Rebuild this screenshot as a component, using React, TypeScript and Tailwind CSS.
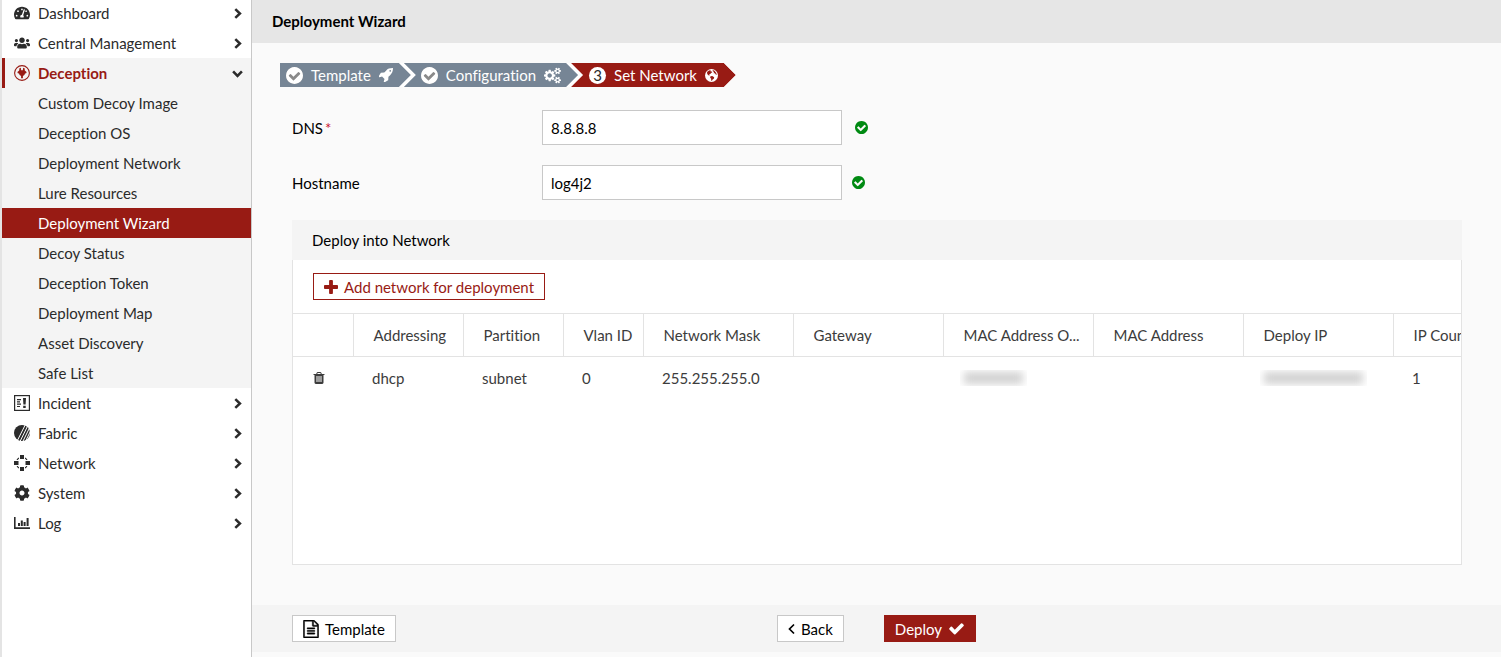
import type { ComponentType, ReactNode } from "react";
import { FaCog, FaTachometerAlt, FaUsers } from "react-icons/fa";

type IconProps = { className?: string };
type Icon = ComponentType<IconProps>;

function Glyph({ d, className, viewBox = "0 0 1792 1792" }: { d: string; className?: string; viewBox?: string }) {
  return (
    <svg viewBox={viewBox} fill="currentColor" className={className} aria-hidden="true">
      <path d={d} />
    </svg>
  );
}

const TrashIcon = (p: IconProps) => (
  <Glyph {...p} d="M704 1376v-704q0-14-9-23t-23-9h-64q-14 0-23 9t-9 23v704q0 14 9 23t23 9h64q14 0 23-9t9-23zm256 0v-704q0-14-9-23t-23-9h-64q-14 0-23 9t-9 23v704q0 14 9 23t23 9h64q14 0 23-9t9-23zm256 0v-704q0-14-9-23t-23-9h-64q-14 0-23 9t-9 23v704q0 14 9 23t23 9h64q14 0 23-9t9-23zm-544-992h448l-48-117q-7-9-17-11h-317q-10 2-17 11zm928 32v64q0 14-9 23t-23 9h-96v948q0 83-47 143.500t-113 60.500h-832q-66 0-113-58.500t-47-141.500v-952h-96q-14 0-23-9t-9-23v-64q0-14 9-23t23-9h309l70-167q15-37 54-63t79-26h320q40 0 79 26t54 63l70 167h309q14 0 23 9t9 23z" />
);
const CheckIcon = (p: IconProps) => (
  <Glyph {...p} d="M1671 566q0 40-28 68l-724 724-136 136q-28 28-68 28t-68-28l-136-136-362-362q-28-28-28-68t28-68l136-136q28-28 68-28t68 28l294 295 656-657q28-28 68-28t68 28l136 136q28 28 28 68z" />
);
const CheckCircleIcon = (p: IconProps) => (
  <Glyph
    {...p}
    viewBox="128 128 1536 1536"
    d="M1412 734q0-28-18-46l-91-90q-19-19-45-19t-45 19l-408 407-226-226q-19-19-45-19t-45 19l-91 90q-18 18-18 46 0 27 18 45l362 362q19 19 45 19 27 0 46-19l543-543q18-18 18-45zm252 162q0 209-103 385.500t-279.500 279.500-385.500 103-385.500-103-279.500-279.500-103-385.500 103-385.500 279.500-279.500 385.500-103 385.500 103 279.500 279.500 103 385.500z"
  />
);
const PlusIcon = (p: IconProps) => (
  <Glyph
    {...p}
    viewBox="192 128 1408 1408"
    d="M1600 736v192q0 40-28 68t-68 28h-416v416q0 40-28 68t-68 28h-192q-40 0-68-28t-28-68v-416h-416q-40 0-68-28t-28-68v-192q0-40 28-68t68-28h416v-416q0-40 28-68t68-28h192q40 0 68 28t28 68v416h416q40 0 68 28t28 68z"
  />
);
const FileTextIcon = (p: IconProps) => (
  <Glyph
    {...p}
    viewBox="128 0 1536 1792"
    d="M1596 380q28 28 48 76t20 88v1152q0 40-28 68t-68 28h-1344q-40 0-68-28t-28-68v-1600q0-40 28-68t68-28h896q40 0 88 20t76 48zm-444-244v376h376q-10-29-22-41l-313-313q-12-12-41-22zm384 1528v-1024h-416q-40 0-68-28t-28-68v-416h-768v1536h1280zm-1024-864q0-14 9-23t23-9h704q14 0 23 9t9 23v64q0 14-9 23t-23 9h-704q-14 0-23-9t-9-23v-64zm736 224q14 0 23 9t9 23v64q0 14-9 23t-23 9h-704q-14 0-23-9t-9-23v-64q0-14 9-23t23-9h704zm0 256q14 0 23 9t9 23v64q0 14-9 23t-23 9h-704q-14 0-23-9t-9-23v-64q0-14 9-23t23-9h704z"
  />
);
const RocketIcon = (p: IconProps) => (
  <Glyph
    {...p}
    viewBox="64 128 1600 1600"
    d="M1440 448q0-40-28-68t-68-28-68 28-28 68 28 68 68 28 68-28 28-68zm224-288q0 249-75.500 430.500t-253.500 360.500q-81 80-195 176l-20 379q-2 16-16 26l-384 224q-7 4-16 4-12 0-23-9l-64-64q-13-14-8-32l85-276-281-281-276 85q-3 1-9 1-14 0-23-9l-64-64q-17-19-5-39l224-384q10-14 26-16l379-20q96-114 176-195 188-187 358-258t431-71q14 0 24 9.500t10 22.500z"
  />
);
const CogsIcon = (p: IconProps) => (
  <Glyph
    {...p}
    viewBox="0 0 1920 1792"
    d="M896 896q0-106-75-181t-181-75-181 75-75 181 75 181 181 75 181-75 75-181zm768 512q0-52-38-90t-90-38-90 38-38 90q0 53 37.500 90.500t90.500 37.500 90.500-37.500 37.500-90.500zm0-1024q0-52-38-90t-90-38-90 38-38 90q0 53 37.500 90.500t90.500 37.500 90.500-37.500 37.500-90.500zm-384 421v185q0 10-7 19.500t-16 10.500l-155 24q-11 35-32 76 34 48 90 115 7 11 7 20 0 12-7 19-23 30-82.500 89.500t-78.500 59.500q-11 0-21-7l-115-90q-37 19-77 31-11 108-23 155-7 24-30 24h-186q-11 0-20-7.500t-10-17.500l-23-153q-34-10-75-31l-118 89q-7 7-20 7-11 0-21-8-144-133-144-160 0-9 7-19 10-14 41-53t47-61q-23-44-35-82l-152-24q-10-1-17-9.500t-7-19.500v-185q0-10 7-19.500t16-10.500l155-24q11-35 32-76-34-48-90-115-7-11-7-20 0-12 7-20 22-30 82-89t79-59q11 0 21 7l115 90q34-18 77-32 11-108 23-154 7-24 30-24h186q11 0 20 7.500t10 17.500l23 153q34 10 75 31l118-89q8-7 20-7 11 0 21 8 144 133 144 160 0 8-7 19-12 16-42 54t-45 60q23 48 34 82l152 23q10 2 17 10.500t7 19.500zm640 533v140q0 16-149 31-12 27-30 52 51 113 51 138 0 4-4 7-122 71-124 71-8 0-46-47t-52-68q-20 2-30 2t-30-2q-14 21-52 68t-46 47q-2 0-124-71-4-3-4-7 0-25 51-138-18-25-30-52-149-15-149-31v-140q0-16 149-31 13-29 30-52-51-113-51-138 0-4 4-7 4-2 35-20t59-34 30-16q8 0 46 46.500t52 67.500q20-2 30-2t30 2q51-71 92-112l6-2q4 0 124 70 4 3 4 7 0 25-51 138 17 23 30 52 149 15 149 31zm0-1024v140q0 16-149 31-12 27-30 52 51 113 51 138 0 4-4 7-122 71-124 71-8 0-46-47t-52-68q-20 2-30 2t-30-2q-14 21-52 68t-46 47q-2 0-124-71-4-3-4-7 0-25 51-138-18-25-30-52-149-15-149-31v-140q0-16 149-31 13-29 30-52-51-113-51-138 0-4 4-7 4-2 35-20t59-34 30-16q8 0 46 46.500t52 67.500q20-2 30-2t30 2q51-71 92-112l6-2q4 0 124 70 4 3 4 7 0 25-51 138 17 23 30 52 149 15 149 31z"
  />
);

function DoneIcon() {
  return (
    <span className="flex rounded-full bg-[#8a8a8a]">
      <CheckCircleIcon className="size-[17px]" />
    </span>
  );
}
function GlobeIcon({ className }: IconProps) {
  return (
    <svg viewBox="0 0 14 14" className={className} aria-hidden="true">
      <circle cx="7" cy="7" r="7" fill="currentColor" />
      <g fill="#981b14">
        <path d="M2.200 3.200L4.300 1.700L6.200 1.300L5.800 2.300L7.200 2.700L7.900 3.600L6.600 4.300L5.700 5.400L4.500 6L4.900 7.200L3.700 6.800L2.400 5.300Z" />
        <path d="M8.200 1.200L10.300 2L12.100 4.200L12.700 6.500L11.600 5.900L10.700 4.500L9.300 4.600L9.700 3.200L8.500 2.400Z" />
        <path d="M5.900 7.700L7.800 7.500L9.900 8.900L9.500 10.500L8.200 11.400L7.500 12.700L6.700 12.600L6.600 10.500L5.500 9.100Z" />
      </g>
    </svg>
  );
}
function ChevronIcon({ className }: IconProps) {
  return (
    <svg viewBox="0 0 10 10" fill="none" stroke="currentColor" strokeWidth="2.300" className={className} aria-hidden="true">
      <path d="M3 1L7.200 5L3 9" />
    </svg>
  );
}
function AngleLeftIcon({ className }: IconProps) {
  return (
    <svg viewBox="0 0 7 12" fill="none" stroke="currentColor" strokeWidth="1.700" className={className} aria-hidden="true">
      <path d="M6 1.500L1.500 6L6 10.500" />
    </svg>
  );
}
function DeceptionIcon({ className }: IconProps) {
  return (
    <svg viewBox="0 0 16 16" fill="currentColor" className={className} aria-hidden="true">
      <circle cx="8" cy="8" r="7.400" fill="none" stroke="currentColor" strokeWidth="1.100" />
      <path d="M5.400 3.200L6.800 2.800L7.200 5.200H8.800L9.200 2.800L10.600 3.200L10.800 5.400L12.600 7L12.200 8.200L11 8.400L10.400 10L8.900 10.900V13.200H7.100V10.900L5.600 10L5 8.400L3.800 8.200L3.400 7L5.200 5.400Z" />
    </svg>
  );
}
function IncidentIcon({ className }: IconProps) {
  return (
    <svg viewBox="0 0 16 16" fill="currentColor" className={className} aria-hidden="true">
      <rect x="0.600" y="0.600" width="14.800" height="14.800" fill="none" stroke="currentColor" strokeWidth="1.200" />
      <path d="M3 4h4v1.200H3zM3 6.300h3v1.200H3zM3 8.600h4v1.200H3zM3 10.900h3v1.200H3zM9 3h3L11.600 9.500H9.400zM9.200 10.800h2.500V13H9.200z" />
    </svg>
  );
}
function FabricIcon({ className }: IconProps) {
  return (
    <svg viewBox="0 0 16 16" className={className} aria-hidden="true">
      <circle cx="8" cy="8" r="8" fill="currentColor" />
      <g stroke="white" strokeWidth="1" fill="none">
        <path d="M3.400 15.500L11.200 0M6 16.500L13.400 1.500M8.600 17L15.200 3.500M11.200 17L16.500 6" />
      </g>
    </svg>
  );
}
function NetworkIcon({ className }: IconProps) {
  return (
    <svg viewBox="0 0 16 16" fill="currentColor" className={className} aria-hidden="true">
      <circle cx="8" cy="8" r="5.800" fill="none" stroke="currentColor" strokeWidth="1.200" />
      <path fill="white" d="M5 0h6v5H5zM5 11h6v5H5zM0 5h5v6H0zM11 5h5v6h-5z" />
      <path d="M6 0h4v4H6zM6 12h4v4H6zM0 6h4.500v4H0zM11.500 6H16v4h-4.500z" />
    </svg>
  );
}
function LogIcon({ className }: IconProps) {
  return (
    <svg viewBox="0 0 16 16" fill="currentColor" className={className} aria-hidden="true">
      <path d="M0 2h1.600v10.200H16V14H0zM4 8h2v3H4zM6.800 5.500h2V11h-2zM9.600 7h2v4h-2zM12.600 3h2v8h-2z" />
    </svg>
  );
}

const deceptionPages = [
  "Custom Decoy Image",
  "Deception OS",
  "Deployment Network",
  "Lure Resources",
  "Deployment Wizard",
  "Decoy Status",
  "Deception Token",
  "Deployment Map",
  "Asset Discovery",
  "Safe List",
];

function MenuItem({ icon: IconCmp, label, open = false }: { icon: Icon; label: string; open?: boolean }) {
  return (
    <button
      type="button"
      aria-expanded={open}
      className={
        open
          ? "flex h-[30px] w-full items-center gap-2 border-l-3 border-[#981b14] pr-2 pl-[9px] text-left font-bold text-[#981b14]"
          : "flex h-[30px] w-full items-center gap-2 pr-2 pl-3 text-left"
      }
    >
      <IconCmp className="size-4 shrink-0" />
      <span className="flex-1">{label}</span>
      <ChevronIcon className={open ? "size-[11px] rotate-90 text-[#2b2b2b]" : "size-[11px] text-[#2b2b2b]"} />
    </button>
  );
}

function Sidebar() {
  return (
    <nav aria-label="Main" className="flex w-[252px] shrink-0 flex-col border-r border-l-2 border-r-[#c8c8c8] border-l-[#e4e4e4] bg-white text-[#2b2b2b]">
      <div className="-mt-0.5">
        <MenuItem icon={FaTachometerAlt} label="Dashboard" />
        <MenuItem icon={FaUsers} label="Central Management" />
      </div>
      <div className="bg-[#f4f4f4]">
        <MenuItem icon={DeceptionIcon} label="Deception" open />
        <ul>
          {deceptionPages.map((page) => (
            <li key={page}>
              <a
                href="#"
                className={
                  page === "Deployment Wizard"
                    ? "flex h-[30px] items-center bg-[#981b14] pl-9 text-white"
                    : "flex h-[30px] items-center pl-9"
                }
              >
                {page}
              </a>
            </li>
          ))}
        </ul>
      </div>
      <MenuItem icon={IncidentIcon} label="Incident" />
      <MenuItem icon={FabricIcon} label="Fabric" />
      <MenuItem icon={NetworkIcon} label="Network" />
      <MenuItem icon={FaCog} label="System" />
      <MenuItem icon={LogIcon} label="Log" />
    </nav>
  );
}

function Steps() {
  return (
    <ol className="ml-7 flex h-6 w-fit bg-white text-white [clip-path:polygon(0_0,calc(100%_-_12px)_0,100%_50%,calc(100%_-_12px)_100%,0_100%)]">
      <li className="flex items-center gap-2 bg-[#768595] pr-[18px] pl-1.5 [clip-path:polygon(0_0,calc(100%_-_12px)_0,100%_50%,calc(100%_-_12px)_100%,0_100%)]">
        <DoneIcon />
        Template
        <RocketIcon className="size-[14px]" />
      </li>
      <li className="-ml-[7px] flex items-center gap-2 bg-[#768595] px-[17px] [clip-path:polygon(0_0,calc(100%_-_12px)_0,100%_50%,calc(100%_-_12px)_100%,0_100%,12px_50%)]">
        <DoneIcon />
        Configuration
        <CogsIcon className="size-[17px]" />
      </li>
      <li
        aria-current="step"
        className="-ml-[7px] flex items-center gap-2 bg-[#981b14] px-[18px] [clip-path:polygon(0_0,calc(100%_-_12px)_0,100%_50%,calc(100%_-_12px)_100%,0_100%,12px_50%)]"
      >
        <span className="flex size-[17px] items-center justify-center rounded-full bg-white text-[#2b2b2b]">3</span>
        Set Network
        <GlobeIcon className="size-[13px]" />
      </li>
    </ol>
  );
}

function Field({ id, label, value, required = false }: { id: string; label: string; value: string; required?: boolean }) {
  return (
    <div className="flex items-center">
      <label htmlFor={id} className="w-[250px] shrink-0">
        {label}
        {required && <span className="ml-0.5 text-[#c8102e]">*</span>}
      </label>
      <input id={id} type="text" defaultValue={value} className="h-[35px] w-[300px] border border-[#c8c8c8] bg-white px-2" />
      <CheckCircleIcon className={required ? "ml-[13px] size-[13px] text-[#008a12]" : "ml-2.5 size-[13px] text-[#008a12]"} />
    </div>
  );
}

function Redacted({ children }: { children: ReactNode }) {
  return (
    <span aria-hidden="true" className="-ml-0.5 flex h-4 w-fit items-center overflow-hidden px-1">
      {children}
    </span>
  );
}

const columns = [
  { name: "", width: "w-[60px]" },
  { name: "Addressing", width: "w-[110px]" },
  { name: "Partition", width: "w-[100px]" },
  { name: "Vlan ID", width: "w-[80px]" },
  { name: "Network Mask", width: "w-[150px]" },
  { name: "Gateway", width: "w-[150px]" },
  { name: "MAC Address O...", width: "w-[150px]" },
  { name: "MAC Address", width: "w-[150px]" },
  { name: "Deploy IP", width: "w-[150px]" },
  { name: "IP Count", width: "w-[150px]" },
];

function NetworkPanel() {
  const cells: ReactNode[] = [
    <button key="delete" type="button" aria-label="Delete" className="flex items-center">
      <TrashIcon className="size-[14px]" />
    </button>,
    "dhcp",
    "subnet",
    "0",
    "255.255.255.0",
    "",
    <Redacted key="mac">
      <span className="h-3 w-[59px] bg-[#d0d0d0] blur-[4px]" />
    </Redacted>,
    "",
    <Redacted key="ip">
      <span className="h-3 w-[99px] bg-[#d0d0d0] blur-[4px]" />
    </Redacted>,
    "1",
  ];
  return (
    <section className="mr-[39px] ml-10 mt-5">
      <h2 className="flex h-10 items-center bg-[#f4f4f4] px-5">Deploy into Network</h2>
      <div className="min-h-[305px] overflow-hidden border border-t-0 border-[#e3e3e3] bg-white text-[#3c3c3c]">
        <div className="px-5 py-[13px]">
          <button type="button" className="flex h-[27px] items-center gap-1.5 border border-[#981b14] px-2.5 text-[#981b14]">
            <PlusIcon className="size-[14px]" />
            Add network for deployment
          </button>
        </div>
        <table className="w-[1250px] table-fixed border-collapse text-left">
          <thead>
            <tr className="h-[43px] border-y border-[#e3e3e3]">
              {columns.map((col) => (
                <th key={col.name} scope="col" className={`${col.width} border-r border-[#e3e3e3] pl-5 font-normal whitespace-nowrap`}>
                  {col.name}
                </th>
              ))}
            </tr>
          </thead>
          <tbody>
            <tr className="h-[43px]">
              {cells.map((cell, i) => (
                <td key={i} className="pl-[19px]">
                  {cell}
                </td>
              ))}
            </tr>
          </tbody>
        </table>
      </div>
    </section>
  );
}

export default function App() {
  return (
    <div className="flex min-h-screen bg-[#fafafa] font-['Lato',sans-serif] text-[15px] leading-5 text-black [font-variant-ligatures:none]">
      <Sidebar />
      <main className="flex min-w-0 flex-1 flex-col">
        <h1 className="flex h-[43px] items-center bg-[#e6e6e6] px-5 pb-0.5 font-bold">Deployment Wizard</h1>
        <div className="pt-5">
          <Steps />
        </div>
        <div className="mt-[23px] ml-10 flex flex-col gap-5">
          <Field id="dns" label="DNS" value="8.8.8.8" required />
          <Field id="hostname" label="Hostname" value="log4j2" />
        </div>
        <NetworkPanel />
        <footer className="mt-10 grid h-[47px] grid-cols-[1fr_auto_1fr] items-center bg-[#f4f4f4] px-10 py-0.5">
          <button type="button" className="flex h-[27px] w-fit items-center gap-1.5 border border-[#c8c8c8] bg-white px-2.5">
            <FileTextIcon className="h-[18px] w-4 stroke-current stroke-[40]" />
            Template
          </button>
          <div className="flex gap-10">
            <button type="button" className="flex h-[27px] items-center gap-1.5 border border-[#c8c8c8] bg-white px-2.5">
              <AngleLeftIcon className="h-3 w-[7px]" />
              Back
            </button>
            <button type="button" className="flex h-[27px] items-center gap-1.5 bg-[#981b14] px-[11px] text-white">
              Deploy
              <CheckIcon className="size-[17px]" />
            </button>
          </div>
        </footer>
      </main>
    </div>
  );
}
